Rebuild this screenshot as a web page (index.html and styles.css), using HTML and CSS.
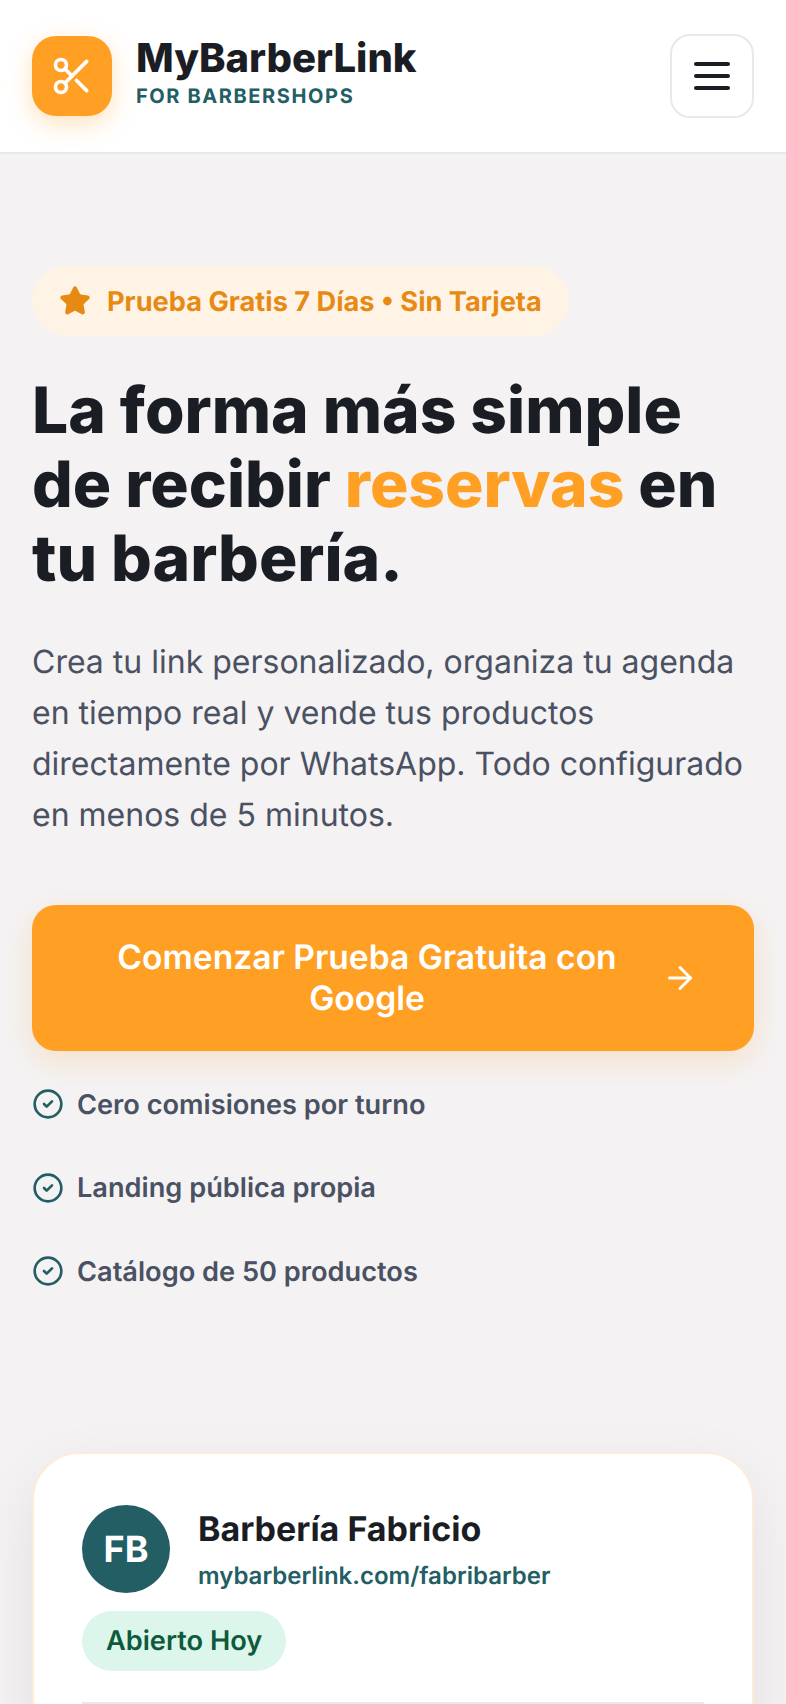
FILE: index.html
```html
<!DOCTYPE html>
<html lang="es">
<head>
  <meta charset="UTF-8">
  <title>MyBarberLink</title>
  <link rel="stylesheet" href="styles.css">
</head>
<body>
  <div class="page">
    <header class="topbar">
      <a href="#" class="brand">
        <span class="brand-icon">
          <svg viewBox="0 0 24 24" width="44" height="44" fill="none" stroke="#fff" stroke-width="2" stroke-linecap="round" stroke-linejoin="round">
            <circle cx="6" cy="6" r="3"/>
            <circle cx="6" cy="18" r="3"/>
            <path d="M20 4 8.12 15.88"/>
            <path d="M14.47 14.48 20 20"/>
            <path d="M8.12 8.12 12 12"/>
          </svg>
        </span>
        <span class="brand-text">
          <span class="brand-name">MyBarberLink</span>
          <span class="brand-sub">FOR BARBERSHOPS</span>
        </span>
      </a>
      <button class="menu-btn" aria-label="Menu">
        <svg viewBox="0 0 36 28" width="36" height="28" fill="none" stroke="#1b1d24" stroke-width="4" stroke-linecap="round">
          <path d="M2 2h32"/>
          <path d="M2 14h32"/>
          <path d="M2 26h32"/>
        </svg>
      </button>
    </header>

    <main class="hero">
      <div class="trial-badge">
        <svg viewBox="0 0 24 24" width="32" height="32" fill="#e78a14" stroke="#e78a14" stroke-width="2" stroke-linejoin="round">
          <path d="M11.525 2.295a.53.53 0 0 1 .95 0l2.31 4.679a2.123 2.123 0 0 0 1.595 1.16l5.166.756a.53.53 0 0 1 .294.904l-3.736 3.638a2.123 2.123 0 0 0-.611 1.878l.882 5.14a.53.53 0 0 1-.771.56l-4.618-2.428a2.122 2.122 0 0 0-1.973 0L6.396 21.01a.53.53 0 0 1-.77-.56l.881-5.139a2.122 2.122 0 0 0-.611-1.879L2.16 9.795a.53.53 0 0 1 .294-.906l5.165-.755a2.122 2.122 0 0 0 1.597-1.16z"/>
        </svg>
        <span>Prueba Gratis 7 Días • Sin Tarjeta</span>
      </div>

      <h1>La forma más simple de recibir <span class="accent">reservas</span> en tu barbería.</h1>

      <p class="lead">Crea tu link personalizado, organiza tu agenda en tiempo real y vende tus productos directamente por WhatsApp. Todo configurado en menos de 5 minutos.</p>

      <a href="#" class="cta">
        <span class="cta-label">Comenzar Prueba Gratuita con Google</span>
        <svg viewBox="0 0 24 24" width="36" height="36" fill="none" stroke="#fff" stroke-width="2" stroke-linecap="round" stroke-linejoin="round">
          <path d="M5 12h14"/>
          <path d="m12 5 7 7-7 7"/>
        </svg>
      </a>

      <ul class="perks">
        <li>
          <svg viewBox="0 0 24 24" width="32" height="32" fill="none" stroke="#225e63" stroke-width="2" stroke-linecap="round" stroke-linejoin="round"><circle cx="12" cy="12" r="10"/><path d="m9 12 2 2 4-4"/></svg>
          Cero comisiones por turno
        </li>
        <li>
          <svg viewBox="0 0 24 24" width="32" height="32" fill="none" stroke="#225e63" stroke-width="2" stroke-linecap="round" stroke-linejoin="round"><circle cx="12" cy="12" r="10"/><path d="m9 12 2 2 4-4"/></svg>
          Landing pública propia
        </li>
        <li>
          <svg viewBox="0 0 24 24" width="32" height="32" fill="none" stroke="#225e63" stroke-width="2" stroke-linecap="round" stroke-linejoin="round"><circle cx="12" cy="12" r="10"/><path d="m9 12 2 2 4-4"/></svg>
          Catálogo de 50 productos
        </li>
      </ul>

      <section class="shop-card">
        <div class="shop-head">
          <div class="avatar">FB</div>
          <div class="shop-info">
            <div class="shop-name">Barbería Fabricio</div>
            <div class="shop-url">mybarberlink.com/fabribarber</div>
          </div>
        </div>
        <span class="open-pill">Abierto Hoy</span>
        <hr class="shop-line">
      </section>
    </main>
  </div>
</body>
</html>
```

FILE: styles.css
```css
* {
  box-sizing: border-box;
}
html, body {
  margin: 0;
  height: 1704px;
  overflow: hidden;
}
body {
  font-family: Inter, 'Noto Sans', sans-serif;
  background-color: #f4f2f3;
  color: #1b1d24;
  text-rendering: geometricPrecision;
}
a {
  text-decoration: none;
}
.page {
  height: 1704px;
  overflow: hidden;
}
.topbar {
  display: flex;
  align-items: center;
  justify-content: space-between;
  height: 154px;
  padding: 0 32px;
  background: #fff;
  border-bottom: 2px solid #e8e8ec;
}
.brand {
  display: flex;
  align-items: center;
  gap: 24px;
}
.brand-icon {
  display: flex;
  align-items: center;
  justify-content: center;
  width: 80px;
  height: 80px;
  border-radius: 24px;
  background: #ff9f24;
  box-shadow: 0 8px 24px rgba(255, 159, 36, 0.3);
}
.brand-text {
  display: flex;
  flex-direction: column;
  gap: 2px;
  padding-bottom: 10px;
}
.brand-name {
  font-size: 40px;
  font-weight: 800;
  line-height: 48px;
  color: #1b1d24;
}
.brand-sub {
  font-size: 20px;
  font-weight: 700;
  line-height: 24px;
  letter-spacing: 1.6px;
  color: #225e63;
}
.menu-btn {
  display: flex;
  align-items: center;
  justify-content: center;
  width: 84px;
  height: 84px;
  padding: 0;
  background: #fff;
  border: 2px solid #e8e8ec;
  border-radius: 20px;
}
.hero {
  padding: 112px 32px 0;
}
.trial-badge {
  display: inline-flex;
  align-items: center;
  gap: 16px;
  height: 70px;
  padding: 0 27px;
  border-radius: 35px;
  background: #fff3e6;
  color: #e78a14;
  font-size: 27.2px;
  font-weight: 700;
}
h1 {
  margin: 38px 0 0;
  font-size: 64px;
  font-weight: 800;
  line-height: 74px;
}
.accent {
  color: #ff9f24;
}
.lead {
  margin: 40px 0 0;
  font-size: 32px;
  line-height: 51px;
  color: #4a5162;
}
.cta {
  display: flex;
  align-items: center;
  gap: 16px;
  margin-top: 65px;
  min-height: 146px;
  padding: 32px 56px;
  border-radius: 24px;
  background: #ff9f24;
  box-shadow: 0 10px 30px rgba(255, 159, 36, 0.2);
  color: #fff;
  font-size: 33.6px;
  font-weight: 600;
  line-height: 41px;
  text-align: center;
}
.cta-label {
  flex: 1;
}
.perks {
  margin: 31px 0 0;
  padding: 0;
  list-style: none;
}
.perks li {
  display: flex;
  align-items: center;
  gap: 13px;
  height: 44px;
  margin-bottom: 39.5px;
  font-size: 27.2px;
  font-weight: 600;
  color: #4a5162;
}
.shop-card {
  margin-top: 159px;
  height: 500px;
  padding: 51px 48px;
  background: #fff;
  border: 2px solid #ffecd8;
  border-radius: 48px;
  box-shadow: 0 20px 60px rgba(0, 0, 0, 0.08);
}
.shop-head {
  display: flex;
  align-items: center;
  gap: 28px;
}
.shop-info {
  padding-top: 4px;
}
.avatar {
  display: flex;
  align-items: center;
  justify-content: center;
  flex-shrink: 0;
  width: 88px;
  height: 88px;
  border-radius: 50%;
  background: #225e63;
  color: #fff;
  font-size: 36px;
  font-weight: 700;
}
.shop-name {
  font-size: 34px;
  font-weight: 700;
  line-height: 40px;
}
.shop-url {
  margin-top: 10px;
  font-size: 24px;
  font-weight: 600;
  line-height: 32px;
  color: #225e63;
}
.open-pill {
  display: inline-block;
  margin-top: 18px;
  padding: 14px 24px;
  border-radius: 30px;
  background: #ddf6eb;
  color: #0e5a3c;
  font-size: 27.2px;
  font-weight: 600;
  line-height: 32px;
}
.shop-line {
  margin: 31px 0 0;
  border: none;
  border-top: 2px solid #e8e8ec;
}
```
